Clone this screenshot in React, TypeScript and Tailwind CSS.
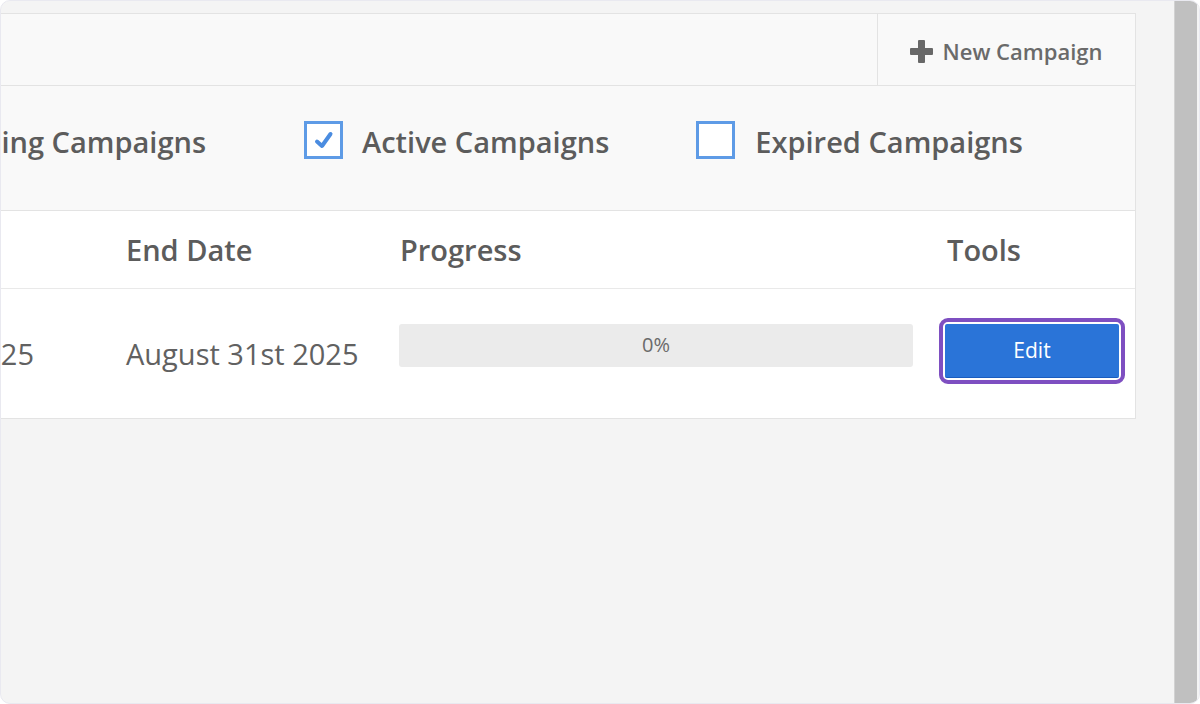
import React from "react";

const font = { fontFamily: '"Open Sans", "Noto Sans", sans-serif' };

function Checkbox({ checked }: { checked?: boolean }) {
  return (
    <div className="w-[39px] h-[38px] shrink-0 border-[3px] border-[#5e9be6] bg-white flex items-center justify-center">
      {checked && (
        <svg width="20" height="18" viewBox="0 0 20 18">
          <path d="M3 10.5 L8 15 L16.5 3" fill="none" stroke="#4a8ce0" strokeWidth="4" strokeLinecap="round" strokeLinejoin="round" />
        </svg>
      )}
    </div>
  );
}

export default function App() {
  return (
    <div style={font} className="w-[1200px] h-[704px] bg-[#f4f4f4] border border-[#e9e9f0] rounded-[10px] overflow-hidden flex">
      <div className="flex-1 min-w-0 overflow-hidden pt-[12px]">
        <div className="mr-[38px] border-t border-r border-b border-[#e3e3e3] bg-white">
          {/* header row */}
          <div className="h-[72px] bg-[#f9f9f9] border-b border-[#e3e3e3] flex justify-end">
            <div className="w-[258px] border-l border-[#e3e3e3] flex items-center justify-center gap-[9px] pt-[3px]">
              <svg width="23" height="23" viewBox="0 0 23 23">
                <rect x="8" y="0" width="7" height="23" rx="1" fill="#686868" />
                <rect x="0" y="8" width="23" height="7" rx="1" fill="#686868" />
              </svg>
              <span className="text-[22px] font-semibold text-[#6a6a6a] whitespace-nowrap">New Campaign</span>
            </div>
          </div>
          {/* filter row */}
          <div className="h-[125px] bg-[#f9f9f9] border-b border-[#e3e3e3] flex items-center pb-[12px]">
            <div className="w-[205px] shrink-0 flex justify-end overflow-hidden">
              <span className="text-[29px] font-semibold text-[#5c5c5c] whitespace-nowrap shrink-0">Upcoming Campaigns</span>
            </div>
            <div className="ml-[98px] mb-[4px]">
              <Checkbox checked />
            </div>
            <span className="ml-[19px] text-[29px] font-semibold text-[#5c5c5c] whitespace-nowrap">Active Campaigns</span>
            <div className="ml-[87px] mb-[4px]">
              <Checkbox />
            </div>
            <span className="ml-[20px] text-[29px] font-semibold text-[#5c5c5c] whitespace-nowrap">Expired Campaigns</span>
          </div>
          {/* table header */}
          <div className="h-[78px] border-b border-[#e9e9e9] flex items-center text-[29px] font-semibold text-[#5c5c5c]">
            <div className="w-[125px] shrink-0" />
            <div className="w-[274px] shrink-0 whitespace-nowrap">End Date</div>
            <div className="w-[547px] shrink-0 whitespace-nowrap">Progress</div>
            <div className="whitespace-nowrap">Tools</div>
          </div>
          {/* data row */}
          <div className="h-[129px] flex items-center">
            <div className="w-[125px] shrink-0">
              <div className="w-[33px] flex justify-end overflow-hidden">
                <span className="text-[29px] text-[#616161] whitespace-nowrap shrink-0">August 1st 2025</span>
              </div>
            </div>
            <div className="w-[273px] shrink-0 text-[29px] text-[#616161] whitespace-nowrap">August 31st 2025</div>
            <div className="w-[514px] h-[43px] shrink-0 mb-[17px] rounded-[3px] bg-[#ebebeb] flex items-center justify-center text-[20px] text-[#6a6a6a]">
              0%
            </div>
            <div className="ml-[26px] w-[186px] h-[66px] shrink-0 mb-[5px] rounded-[9px] border-[4px] border-[#7e4fc1] bg-white p-[2px]">
              <div className="w-full h-full rounded-[2px] bg-[#2a74d8] border-b border-[#1a5cbf] flex items-center justify-center text-[21px] text-white">
                Edit
              </div>
            </div>
          </div>
        </div>
      </div>
      <div className="w-[23px] shrink-0 bg-[#c0c0c0] border-l border-[#d2d2d2]" />
      <div className="w-[2px] shrink-0 bg-[#f4f4f4]" />
    </div>
  );
}
